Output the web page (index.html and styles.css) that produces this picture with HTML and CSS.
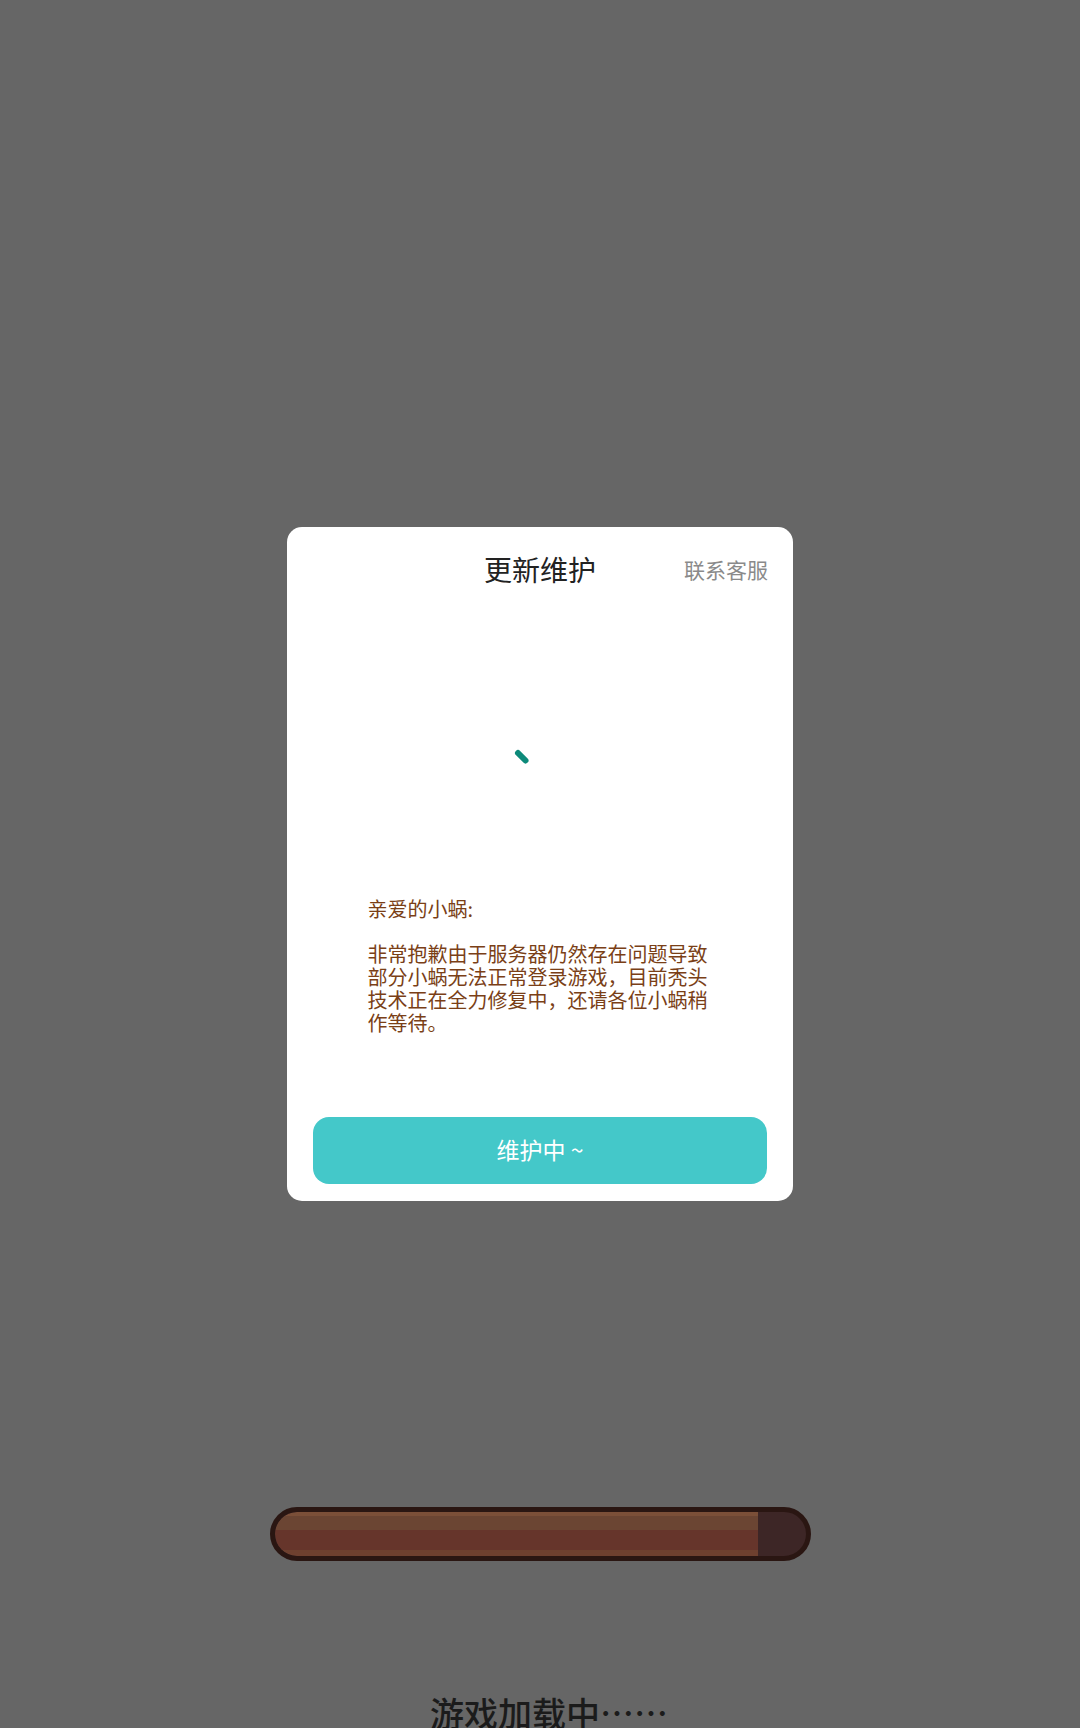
FILE: index.html
```html
<!DOCTYPE html>
<html lang="zh-CN">

<head>
    <meta charset="utf-8">
    <title>游戏加载中</title>
    <link rel="stylesheet" href="styles.css">
</head>

<body>
    <main class="loading">
        <div class="bar">
            <div class="bar-fill" style="width: 91%"></div>
        </div>
        <p class="loading-text">游戏加载中……</p>
    </main>

    <div class="mask">
        <section class="dialog">
            <header class="dialog-head">
                <span></span>
                <h1>更新维护</h1>
                <a class="service" href="#">联系客服</a>
            </header>

            <div class="spinner">
                <svg width="80" height="80" viewBox="-40 -40 80 80">
                    <line x1="-22" y1="-21" x2="-14.5" y2="-13.5" stroke="#0d8a7a" stroke-width="6" stroke-linecap="round" />
                </svg>
            </div>

            <div class="notice">
                <p>亲爱的小蜗:</p>
                <p class="notice-body">非常抱歉由于服务器仍然存在问题导致部分小蜗无法正常登录游戏，目前秃头技术正在全力修复中，还请各位小蜗稍作等待。</p>
            </div>

            <button class="dialog-btn" type="button">维护中 ~</button>
        </section>
    </div>
</body>

</html>
```

FILE: styles.css
```css
* {
    margin: 0;
    padding: 0;
    box-sizing: border-box;
}

html,
body {
    width: 1080px;
    height: 1728px;
    overflow: hidden;
}

body {
    background-color: #666666;
    font-family: "Noto Sans CJK SC", "Noto Sans", sans-serif;
}

/* loading screen under the mask */

.loading {
    display: flex;
    flex-direction: column;
    align-items: center;
    padding-top: 1507px;
}

.bar {
    width: 541px;
    height: 54px;
    border: 5px solid #2a1612;
    border-radius: 27px;
    background-color: #3d2626;
    overflow: hidden;
}

.bar-fill {
    height: 100%;
    border-radius: 22px 0 0 22px;
    background-image: linear-gradient(#7b4f38 0 10%, #6b4533 10% 40%, #66352b 40% 86%, #6e402f 86%);
}

.loading-text {
    margin-top: 128px;
    padding-left: 18px;
    font-size: 34px;
    line-height: 48px;
    font-weight: 500;
    color: #1b1b1b;
}

/* maintenance dialog */

.mask {
    position: fixed;
    inset: 0;
    display: flex;
    align-items: center;
    justify-content: center;
}

.dialog {
    width: 506px;
    height: 674px;
    background-color: white;
    border-radius: 15px;
    display: flex;
    flex-direction: column;
    padding: 0 26px 17px;
}

.dialog-head {
    height: 84px;
    display: grid;
    grid-template-columns: 1fr auto 1fr;
    align-items: center;
}

.dialog-head h1 {
    font-size: 28px;
    font-weight: 400;
    color: #222222;
    line-height: 40px;
}

.service {
    justify-self: end;
    margin-right: -1px;
    font-size: 21px;
    color: #8a8a8a;
    text-decoration: none;
    line-height: 30px;
}

.spinner {
    display: flex;
    justify-content: center;
    margin-top: 123px;
}

.notice {
    width: 345px;
    margin: 83px auto 0;
    font-size: 20px;
    line-height: 23px;
    color: #7a3f17;
}

.notice-body {
    margin-top: 22px;
}

.dialog-btn {
    margin-top: auto;
    height: 67px;
    padding-bottom: 4px;
    border: none;
    border-radius: 16px;
    background-color: #44c8c9;
    color: white;
    font-family: inherit;
    font-size: 23px;
}
```
